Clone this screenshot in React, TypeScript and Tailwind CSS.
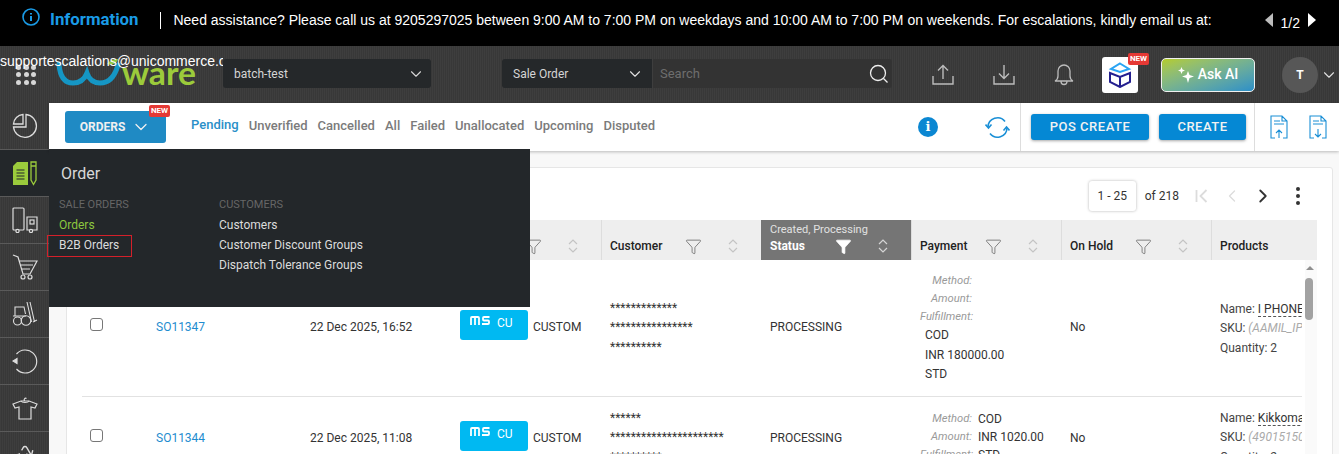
import { ChevronDown, Filter, Recycle, ChevronRight, ChevronLeft } from "lucide-react"

const tabs = ["Unverified", "Cancelled", "All", "Failed", "Unallocated", "Upcoming", "Disputed"]

function SortIcon({ light }: { light?: boolean }) {
  return (
    <svg width="12" height="14" viewBox="0 0 12 14" fill="none" stroke={light ? "#d5d5d5" : "#c4c4c4"} strokeWidth="1.2">
      <path d="M2 5l4-4 4 4M2 9l4 4 4-4" />
    </svg>
  )
}

function HeadCell({ label, sub, active }: { label: string; sub?: string; active?: boolean }) {
  return (
    <div className={active ? "flex flex-col justify-end bg-[#757575] pb-[4px] pl-[9px] pr-[22px]" : "flex flex-col justify-end border-l border-[#dddddd] pb-[4px] pl-[8px] pr-[22px]"}>
      {sub && <div className="mb-[-1px] text-[11px] leading-[14px] text-[#e2e2e2]">{sub}</div>}
      <div className="flex h-[20px] items-center">
        <span className={active ? "flex-1 text-[12px] font-bold text-white" : "flex-1 text-[12px] font-medium text-[#222222]"}>{label}</span>
        <Filter size={17} strokeWidth={1} className={active ? "mr-[25px] fill-white text-white" : "mr-[25px] text-[#555555]"} />
        <SortIcon light={active} />
      </div>
    </div>
  )
}

function ChannelCell({ pad }: { pad?: string }) {
  return (
    <div className={"flex items-center pl-[9px] " + (pad ?? "")}>
      <div className="mb-[4px] flex h-[30px] w-[68px] shrink-0 items-start gap-[7px] rounded-[3px] bg-[#00b9f2] pl-[10px] pt-[5px] text-white">
        <svg width="20" height="10" viewBox="0 0 20 10" fill="none" stroke="white" strokeWidth="1.800">
          <path d="M1 10V3q0-1 1-1h6q1 0 1 1v7M5 2v8M19.500 2H14q-1 0-1 1v1.500q0 1 1 1h4q1 0 1 1V8q0 1-1 1h-6" />
        </svg>
        <span className="text-[12px] leading-[16px]">CU</span>
      </div>
      <span className="ml-[5px] text-[12px] text-[#333333]">CUSTOM</span>
    </div>
  )
}

function PaymentLabels({ values }: { values?: string[] }) {
  const labels = ["Method:", "Amount:", "Fulfillment:"]
  return (
    <div className="w-[52px]">
      {labels.map((l, i) => (
        <div key={l} className="relative h-[18px] whitespace-nowrap text-right text-[11.2px] italic leading-[18px] text-[#9a9a9a]">
          {l}
          {values && <span className="absolute left-[58px] top-0 whitespace-nowrap text-[12px] not-italic text-[#333333]">{values[i]}</span>}
        </div>
      ))}
    </div>
  )
}

function ProductCell({ name, sku, qty, pad }: { name: string; sku: string; qty: string; pad?: string }) {
  return (
    <div className={"flex flex-col justify-center pl-[9px] " + (pad ?? "")}>
      <div className="w-[82px] overflow-hidden whitespace-nowrap text-[12px] leading-[19.5px] text-[#444444]">
        <div>
          Name: <span className="border-b border-dashed border-[#555555] text-[#333333]">{name}</span>
        </div>
        <div>
          SKU: <span className="italic text-[#aaaaaa]">{sku}</span>
        </div>
        <div>Quantity: {qty}</div>
      </div>
    </div>
  )
}

function SideItem({ children, active }: { children: React.ReactNode; active?: boolean }) {
  return (
    <div className={active ? "flex h-[47px] shrink-0 items-center justify-center border-b border-[#5a5a5a] bg-[#23272a]" : "flex h-[47px] shrink-0 items-center justify-center border-b border-[#5a5a5a]"}>
      {children}
    </div>
  )
}

function NewBadge({ className }: { className: string }) {
  return <span className={"absolute flex h-[12px] w-[21px] items-center justify-center rounded-[2px] bg-[#e53935] text-[8px] font-bold text-white " + className}>NEW</span>
}

export default function App() {
  return (
    <div className="relative flex h-screen w-screen flex-col overflow-hidden bg-white font-['Roboto',sans-serif]">
      {/* banner */}
      <div className="flex h-[46px] shrink-0 items-center bg-black pb-[6px] pl-[22px] pr-[23px] text-white">
        <svg width="18" height="18" viewBox="0 0 18 18" fill="none" stroke="#1a9be6" strokeWidth="1.6" className="mb-[6px]">
          <circle cx="9" cy="9" r="8" />
          <path d="M9 8v5M9 5v1.6" strokeWidth="2" />
        </svg>
        <span className="ml-[10px] text-[16.8px] font-bold text-[#1a9be6]">Information</span>
        <span className="ml-[22px] h-[17px] w-[1px] bg-white" />
        <span className="ml-[12px] whitespace-nowrap font-['Liberation_Sans',sans-serif] text-[14px]">
          Need assistance? Please call us at 9205297025 between 9:00 AM to 7:00 PM on weekdays and 10:00 AM to 7:00 PM on weekends. For escalations, kindly email us at:
        </span>
        <div className="ml-auto flex items-center">
          <span className="h-0 w-0 border-y-[7px] border-r-[8px] border-y-transparent border-r-[#bdbdbd]" />
          <span className="ml-[8px] mt-[6px] font-['Liberation_Sans',sans-serif] text-[14px]">1/2</span>
          <span className="ml-[8px] h-0 w-0 border-y-[7px] border-l-[8px] border-y-transparent border-l-white" />
        </div>
      </div>

      <span className="absolute left-0 top-[51px] z-10 w-[223px] overflow-hidden whitespace-nowrap font-['Liberation_Sans',sans-serif] text-[14px] leading-[20px] text-white">
        supportescalations@unicommerce.com
      </span>

      {/* header */}
      <div className="flex h-[57px] shrink-0 items-center bg-[repeating-linear-gradient(90deg,#3e3e3e_0px,#3e3e3e_1px,#383838_1px,#383838_2px)] pl-[16px]">
        <div className="grid w-[20px] grid-cols-3 gap-[2.5px]">
          {Array.from({ length: 9 }).map((_, i) => (
            <span key={i} className="h-[5px] w-[5px] rounded-full bg-[#d6d6d6]" />
          ))}
        </div>
        {/* logo */}
        <svg width="141" height="32" viewBox="0 -1 141 32" fill="none" className="ml-[19px] mt-[1px]">
          <path d="M4 4C5 18 11 23 18 23C26 23 30 18 32 13C34 19 38 23 45 23C54 23 60 16 63 5" stroke="#1596c4" strokeWidth="5" strokeLinecap="round" />
          <path d="M52 4c3-4 7-5 11-5-1 4-5 7-11 5z" fill="#8dc63f" />
          <text x="67" y="25" fontFamily="Lato, sans-serif" fontWeight="700" fontSize="33" fill="#9ccb3b" textLength="74" lengthAdjust="spacingAndGlyphs">ware</text>
        </svg>
        <div className="relative z-20 mb-[2px] ml-[27px] flex h-[29px] w-[208px] items-center justify-between rounded-[3px] bg-[#25282a] pl-[11px] pr-[6px] text-[12px] text-[#d5d5d5]">
          batch-test
          <ChevronDown size={18} strokeWidth={1.5} className="text-[#d5d5d5]" />
        </div>
        <div className="mb-[2px] ml-[71px] flex h-[29px] w-[150px] items-center justify-between rounded-l-[3px] bg-[#25282a] pl-[11px] pr-[8px] text-[12px] text-[#d5d5d5]">
          Sale Order
          <ChevronDown size={18} strokeWidth={1.5} className="text-[#e0e0e0]" />
        </div>
        <div className="mb-[2px] ml-[1px] flex h-[29px] w-[239px] items-center justify-between rounded-r-[3px] bg-[#333333] pl-[7px] pr-[3px] text-[13px] text-[#6e6e6e]">
          Search
          <svg width="20" height="20" viewBox="0 0 20 20" fill="none" stroke="#eeeeee" strokeWidth="1.3">
            <circle cx="9" cy="9" r="7.5" />
            <path d="M14.5 14.5l4 4" />
          </svg>
        </div>
        <svg width="22" height="24" viewBox="0 0 22 24" fill="none" stroke="#bcbcbc" strokeWidth="1.4" className="ml-[40px]">
          <path d="M1 13v8h20v-8M11 16V3M6 7.5L11 2.5l5 5" />
        </svg>
        <svg width="22" height="24" viewBox="0 0 22 24" fill="none" stroke="#bcbcbc" strokeWidth="1.4" className="ml-[39px]">
          <path d="M1 13v8h20v-8M11 2v13M6 10.5l5 5 5-5" />
        </svg>
        <svg width="20" height="24" viewBox="0 0 20 24" fill="none" stroke="#bcbcbc" strokeWidth="1.3" className="ml-[39px]">
          <path d="M1 18c2-1 3-3 3-5V8a6 6 0 0 1 12 0v5c0 2 1 4 3 5zM7 18.500a3 3 0 0 0 6 0" />
        </svg>
        <div className="relative ml-[28px] flex h-[36px] w-[36px] items-center justify-center rounded-[3px] bg-white">
          <svg width="24" height="26" viewBox="0 0 24 26" fill="none" strokeWidth="2">
            <path d="M12 1.500L21 7 12 10 3 7z" stroke="#2aa4f4" />
            <path d="M2 11l10 4 10-4v9l-10 5-10-5z" stroke="#241f8f" />
            <path d="M12 15v9" stroke="#241f8f" />
          </svg>
          <NewBadge className="left-[26px] top-[-4px]" />
        </div>
        <div className="ml-[23px] flex h-[34px] w-[94px] items-center justify-center gap-[4px] rounded-[5px] border border-[#f0f0f0] bg-linear-to-br from-[#b4cc1e] to-[#2b8fc8] text-[14px] font-medium text-white">
          <svg width="16" height="16" viewBox="0 0 16 16" fill="white">
            <path d="M10 4l1.500 4L16 9.500 11.500 11 10 16 8.500 11 4 9.500 8.500 8zM3.500 0l1 2.500 2.500 1-2.500 1-1 2.500-1-2.500L0 3.500l2.500-1z" />
          </svg>
          Ask AI
        </div>
        <div className="ml-[27px] flex h-[36px] w-[36px] items-center justify-center rounded-full bg-[#575757] text-[12px] font-bold text-white">T</div>
        <ChevronDown size={18} strokeWidth={1.5} className="ml-[2px] text-[#e0e0e0]" />
      </div>

      <div className="flex min-h-0 flex-1">
        {/* sidebar */}
        <div className="flex w-[49px] shrink-0 flex-col overflow-hidden bg-[repeating-linear-gradient(90deg,#3e3e3e_0px,#3e3e3e_1px,#383838_1px,#383838_2px)]">
          <SideItem>
            <svg width="26" height="26" viewBox="0 0 26 26" fill="none" stroke="#dddddd" strokeWidth="1.3">
              <path d="M14 1.500A11.500 11.500 0 1 1 1.500 14H14z" />
              <path d="M11 1.500V11H1.500A10 10 0 0 1 11 1.500z" />
            </svg>
          </SideItem>
          <SideItem active>
            <svg width="25" height="25" viewBox="0 0 25 25" fill="none">
              <path d="M5 1h11v23H1V5z" fill="#9bcb3c" />
              <path d="M4.500 9h8M4.500 12h8M4.500 15h8M4.500 18h8" stroke="#23272a" strokeWidth="1.200" />
              <path d="M19 1h5v18l-2.500 4.500L19 19zM19 5h5" stroke="#9bcb3c" strokeWidth="1.300" />
            </svg>
          </SideItem>
          <SideItem>
            <svg width="26" height="26" viewBox="0 0 26 26" fill="none" stroke="#dddddd" strokeWidth="1.2">
              <rect x="1" y="1" width="11" height="22" rx="1" />
              <path d="M15 23V10h10v13z" />
              <rect x="18" y="13" width="4" height="4" />
              <circle cx="5.500" cy="24" r="1.600" fill="#3a3a3a" />
              <circle cx="19" cy="24" r="1.600" fill="#3a3a3a" />
            </svg>
          </SideItem>
          <SideItem>
            <svg width="26" height="26" viewBox="0 0 26 26" fill="none" stroke="#dddddd" strokeWidth="1.2">
              <path d="M1 1l5 2 5 17h7M7 7h18l-7 13M8 11h13M10 15h8" />
              <circle cx="11" cy="23" r="2" />
              <circle cx="18" cy="23" r="2" />
            </svg>
          </SideItem>
          <SideItem>
            <svg width="26" height="26" viewBox="0 0 26 26" fill="none" stroke="#dddddd" strokeWidth="1.1">
              <path d="M3 15V6h9l1.500 7M1 15h13M15 1l4.500 20M18 1l4.500 20M21 21l4-2" />
              <circle cx="5.500" cy="20" r="4" />
              <circle cx="14" cy="19.500" r="4.800" />
            </svg>
          </SideItem>
          <SideItem>
            <svg width="26" height="26" viewBox="0 0 26 26" fill="none" stroke="#dddddd" strokeWidth="1.2">
              <path d="M4.500 6a11.500 11.500 0 1 1 0 15" />
              <path d="M1 13l4 2.500v-5z" fill="#dddddd" />
            </svg>
          </SideItem>
          <SideItem>
            <svg width="26" height="26" viewBox="0 0 26 26" fill="none" stroke="#dddddd" strokeWidth="1.2">
              <path d="M13 6c-2-1 0-3.500 1.500-2.500M9 6h8l8 3-2 4-4-1v12H7V12l-4 1-2-4z" />
              <path d="M9 6c1 2 7 2 8 0" />
            </svg>
          </SideItem>
          <SideItem>
            <Recycle size={28} strokeWidth={1.2} className="mt-[3px] text-[#dddddd]" />
          </SideItem>
        </div>

        <div className="flex min-w-0 flex-1 flex-col">
          {/* sub bar */}
          <div className="z-[5] flex h-[48px] shrink-0 items-center bg-white pl-[16px] pr-[12px] shadow-[0_1px_3px_rgba(0,0,0,0.25)]">
            <div className="relative flex h-[32px] w-[101px] items-center justify-center gap-[6px] rounded-[3px] bg-[#1f8ac4] text-[12px] font-bold text-[#f0f0f0]">
              ORDERS
              <ChevronDown size={20} strokeWidth={1.5} />
              <NewBadge className="right-[-4px] top-[-6px]" />
            </div>
            <div className="ml-[20px] flex h-[47px] items-center border-b-2 border-[#1f8ac4] px-[5px] pb-[3px] text-[13px] font-medium text-[#2a8fc8]">Pending</div>
            <div className="ml-[5px] flex h-[47px] items-center gap-[10px] pb-[3px] text-[13px] font-medium text-[#7b7b7b]">
              {tabs.map((t) => (
                <span key={t}>{t}</span>
              ))}
            </div>
            <div className="flex-1" />
            <div className="flex h-[20px] w-[20px] items-center justify-center rounded-full bg-[#0b87d2] font-['DejaVu_Serif',serif] text-[13px] font-bold text-white">i</div>
            <svg width="25" height="25" viewBox="0 0 25 25" fill="none" stroke="#1a8fd6" strokeWidth="1.600" className="ml-[47px]">
              <path d="M3 12a9.500 9.500 0 0 1 17-5.500M22 13a9.500 9.500 0 0 1-17 5.500" />
              <path d="M0.500 9.500L3.500 13l3-3.500M18.500 15.500l3-3.500 3 3.500" />
            </svg>
            <div className="ml-[10px] w-px self-stretch bg-[#dddddd]" />
            <div className="ml-[10px] flex h-[26px] w-[118px] items-center justify-center rounded-[3px] bg-[#0588d4] text-[13px] font-medium tracking-[0.5px] text-[#f2f2f2] shadow-[0_1px_3px_rgba(0,0,0,0.35)]">POS CREATE</div>
            <div className="ml-[10px] flex h-[26px] w-[87px] items-center justify-center rounded-[3px] bg-[#0588d4] text-[13px] font-medium tracking-[0.5px] text-[#f2f2f2] shadow-[0_1px_3px_rgba(0,0,0,0.35)]">CREATE</div>
            <div className="ml-[8px] w-px self-stretch bg-[#dddddd]" />
            <svg width="18" height="24" viewBox="0 0 18 24" fill="none" stroke="#1a8fd6" strokeWidth="1.100" className="ml-[15px]">
              <path d="M1 18V1h11l5 5v12M12 1v5h5M1 18v5h4M17 18v5h-4M4 6h6M4 9h10M9 23v-8M6 18l3-3 3 3" />
            </svg>
            <svg width="18" height="24" viewBox="0 0 18 24" fill="none" stroke="#1a8fd6" strokeWidth="1.100" className="ml-[21px]">
              <path d="M1 18V1h11l5 5v12M12 1v5h5M1 18v5h4M17 18v5h-4M4 6h6M4 9h10M9 14v8M6 19l3 3 3-3" />
            </svg>
          </div>

          {/* content */}
          <div className="min-h-0 flex-1 overflow-hidden bg-[#f8f8f8] pl-[17px] pr-[6px] pt-[16px]">
            <div className="h-[400px] rounded-[3px] border border-[#e6e6e6] bg-white pl-[15px]">
              <div className="flex h-[52px] items-center justify-end pr-[32px] pt-[3px]">
                <div className="flex h-[30px] w-[47px] items-center justify-center rounded-[3px] bg-white text-[12px] text-[#333333] shadow-[0_0_3px_rgba(0,0,0,0.3)]">1 - 25</div>
                <span className="ml-[9px] text-[12px] text-[#333333]">of 218</span>
                <svg width="13" height="14" viewBox="0 0 13 14" fill="none" stroke="#dcdcdc" strokeWidth="1.800" className="ml-[16px]">
                  <path d="M1.500 1v12M11.500 1l-6 6 6 6" />
                </svg>
                <ChevronLeft size={20} strokeWidth={1.5} className="ml-[14px] text-[#dcdcdc]" />
                <ChevronRight size={22} strokeWidth={2} className="ml-[10px] text-[#333333]" />
                <div className="ml-[22px] flex flex-col gap-[3px]">
                  <span className="h-[4px] w-[4px] rounded-full bg-[#333333]" />
                  <span className="h-[4px] w-[4px] rounded-full bg-[#333333]" />
                  <span className="h-[4px] w-[4px] rounded-full bg-[#333333]" />
                </div>
              </div>

              {/* table */}
              <div className="grid h-[40px] w-[1235px] grid-cols-[65px_154px_150px_150px_160px_150px_150px_150px_106px] bg-[#eeeeee]">
                <div />
                <HeadCell label="Order" />
                <HeadCell label="Created" />
                <HeadCell label="Channel" />
                <HeadCell label="Customer" />
                <HeadCell label="Status" sub="Created, Processing" active />
                <HeadCell label="Payment" />
                <HeadCell label="On Hold" />
                <div className="flex items-end border-l border-[#dddddd] pb-[4px] pl-[8px]">
                  <span className="text-[12px] font-medium leading-[20px] text-[#222222]">Products</span>
                </div>
              </div>

              <div className="flex w-[1235px]">
                <div className="w-[1220px]">
                  <div className="grid h-[137px] grid-cols-[65px_154px_150px_150px_160px_150px_150px_150px_91px] border-b border-[#e2e2e2] text-[12px] text-[#333333]">
                    <div className="flex items-center pb-[8px] pl-[8px]">
                      <span className="h-[13px] w-[13px] rounded-[3px] border border-[#777777]" />
                    </div>
                    <div className="flex items-center pb-[2px] pl-[9px] text-[#1e8ccf]">SO11347</div>
                    <div className="flex items-center pb-[2px] pl-[9px]">22 Dec 2025, 16:52</div>
                    <ChannelCell pad="pb-[2px]" />
                    <div className="flex flex-col justify-center pl-[9px] leading-[19.5px]">
                      <span>*************</span>
                      <span>****************</span>
                      <span>**********</span>
                    </div>
                    <div className="flex items-center pb-[2px] pl-[9px]">PROCESSING</div>
                    <div className="flex flex-col justify-center pl-[9px] pt-[1px]">
                      <PaymentLabels />
                      <div className="pl-[5px] leading-[19.5px]">
                        <div>COD</div>
                        <div>INR 180000.00</div>
                        <div>STD</div>
                      </div>
                    </div>
                    <div className="flex items-center pb-[2px] pl-[9px]">No</div>
                    <ProductCell name="I PHONE 15 PRO" sku="(AAMIL_IPHONE15)" qty="2" pad="pt-[2px]" />
                  </div>
                  <div className="grid h-[82px] grid-cols-[65px_154px_150px_150px_160px_150px_150px_150px_91px] text-[12px] text-[#333333]">
                    <div className="flex items-center pb-[6px] pl-[8px]">
                      <span className="h-[13px] w-[13px] rounded-[3px] border border-[#777777]" />
                    </div>
                    <div className="flex items-center pl-[9px] text-[#1e8ccf]">SO11344</div>
                    <div className="flex items-center pl-[9px]">22 Dec 2025, 11:08</div>
                    <ChannelCell />
                    <div className="flex flex-col justify-center pl-[9px] leading-[19.5px]">
                      <span>******</span>
                      <span>**********************</span>
                      <span>**********</span>
                    </div>
                    <div className="flex items-center pl-[9px]">PROCESSING</div>
                    <div className="flex items-center pb-[2px] pl-[9px]">
                      <PaymentLabels values={["COD", "INR 1020.00", "STD"]} />
                    </div>
                    <div className="flex items-center pl-[9px]">No</div>
                    <ProductCell name="Kikkoman Soy Sauce" sku="(4901515000112)" qty="2" />
                  </div>
                </div>
                {/* scrollbar */}
                <div className="ml-[3px] flex w-[12px] flex-col items-start bg-[#fafafa] pt-[6px]">
                  <span className="ml-[1px] h-0 w-0 border-x-[4px] border-b-[4px] border-x-transparent border-b-[#8f8f8f]" />
                  <span className="mt-[8px] h-[42px] w-[8px] rounded-[4px] bg-[#a2a2a2]" />
                </div>
              </div>
            </div>
          </div>
        </div>
      </div>

      {/* order menu */}
      <div className="absolute left-[49px] top-[149px] z-30 flex h-[158px] w-[481px] flex-col bg-[#23272a] pl-[10px] pt-[15px]">
        <div className="ml-[2px] text-[16px] leading-[20px] text-[#d8d8d8]">Order</div>
        <div className="mt-[15px] flex">
          <div className="w-[160px]">
            <div className="mb-[4px] text-[11px] leading-[12px] text-[#666666]">SALE ORDERS</div>
            <div className="flex h-[20px] items-center text-[12px] text-[#8cc63f]">Orders</div>
            <div className="ml-[-12px] flex h-[22px] w-[85px] items-center border border-[#d4202a] pb-[3px] pl-[11px] text-[12px] text-[#dcdcdc]">B2B Orders</div>
          </div>
          <div>
            <div className="mb-[4px] text-[11px] leading-[12px] text-[#666666]">CUSTOMERS</div>
            <div className="flex h-[20px] items-center text-[12px] text-[#dcdcdc]">Customers</div>
            <div className="flex h-[20px] items-center text-[12px] text-[#dcdcdc]">Customer Discount Groups</div>
            <div className="flex h-[20px] items-center text-[12px] text-[#dcdcdc]">Dispatch Tolerance Groups</div>
          </div>
        </div>
      </div>
    </div>
  )
}
